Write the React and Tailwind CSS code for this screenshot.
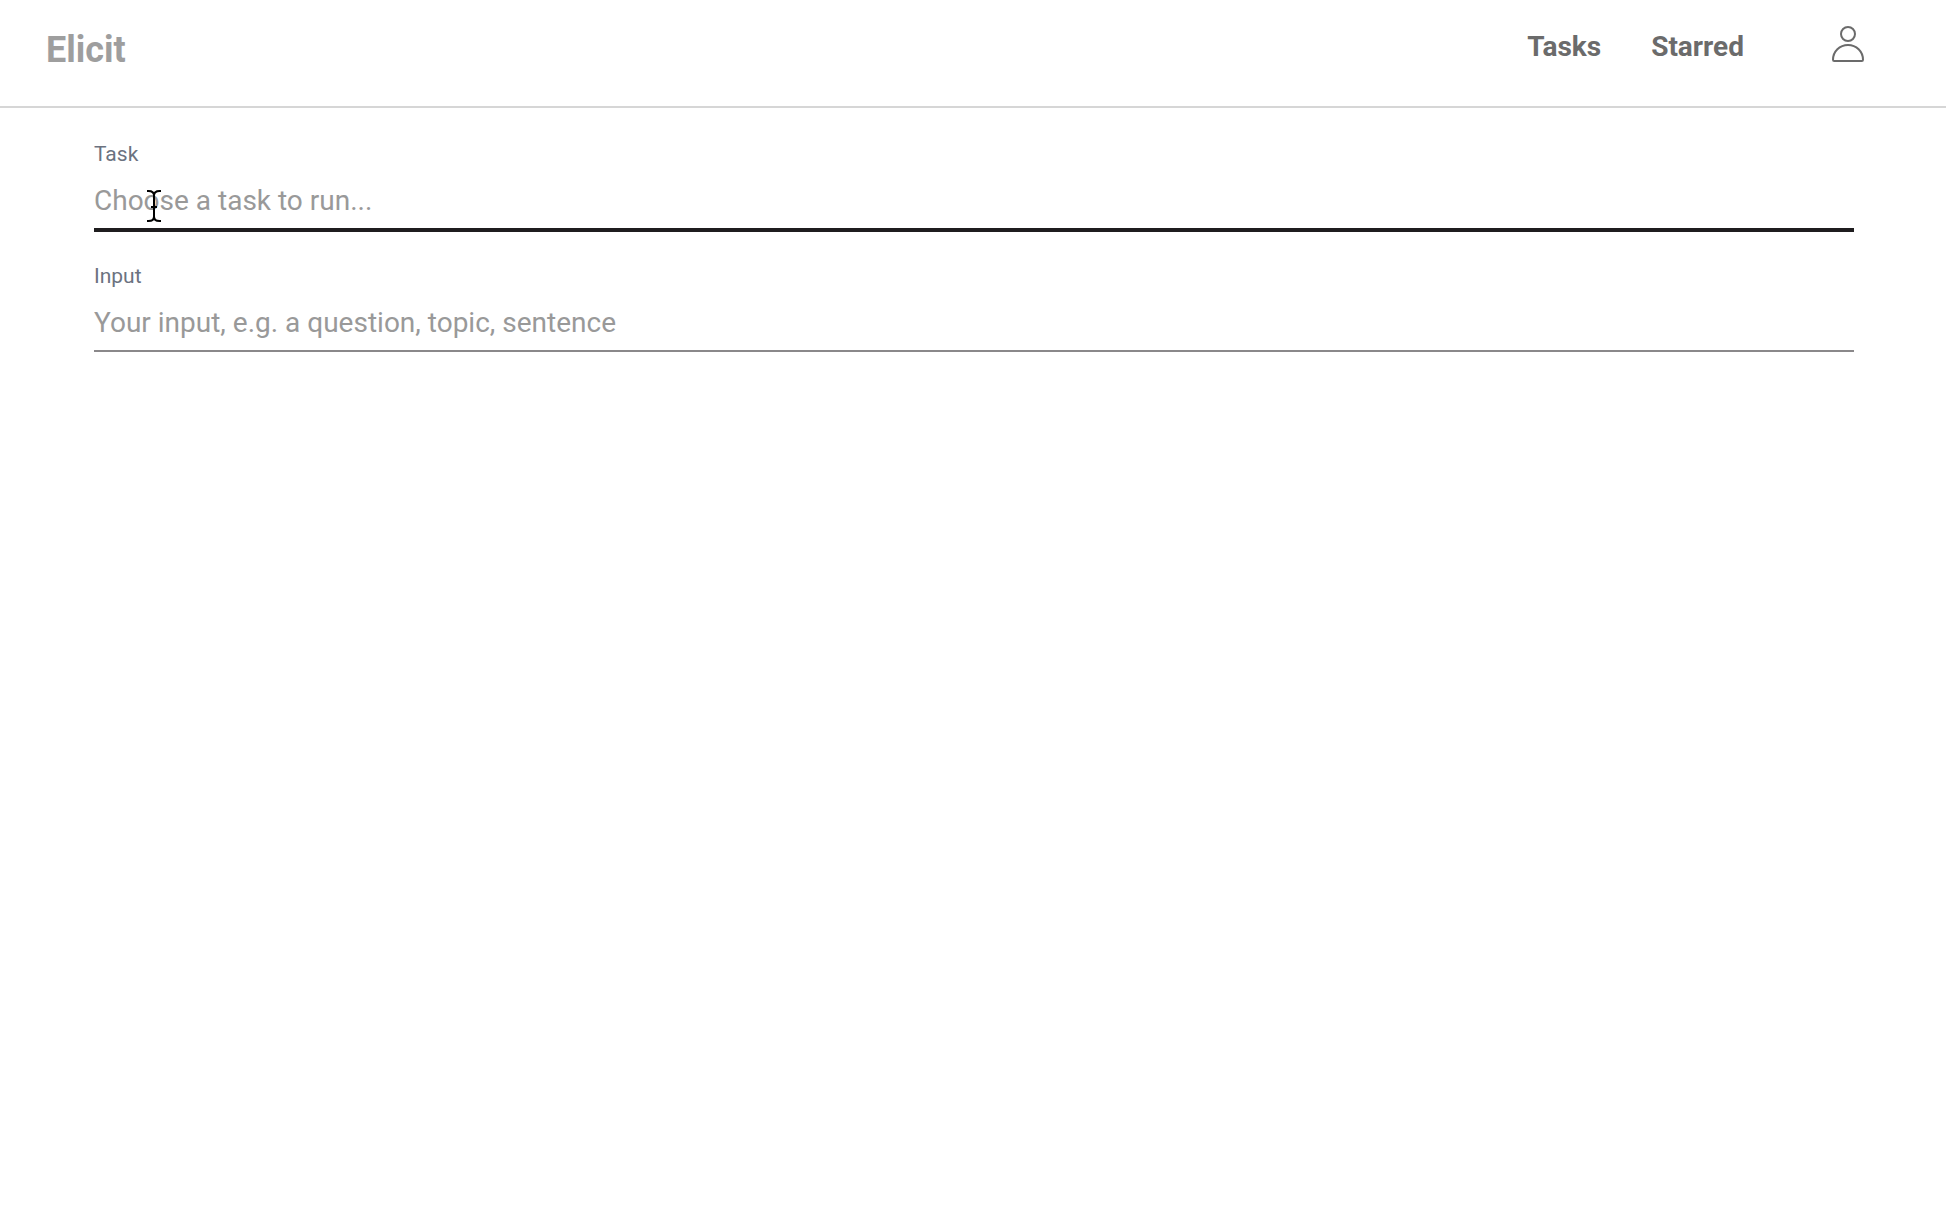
import React from 'react';

const navLinks = [
  { label: 'Tasks', href: '#tasks' },
  { label: 'Starred', href: '#starred' },
];

const UserIcon = () => (
  <svg width="32" height="36" viewBox="0 0 32 36" fill="none" stroke="#6b6b6b" strokeWidth="2" aria-hidden="true">
    <circle cx="16" cy="8" r="7" />
    <path d="M2.2 35h27.6c.8 0 1.2-.4 1.2-1.2C31 25.6 24.4 19 16 19S1 25.6 1 33.8c0 .8.4 1.2 1.2 1.2z" />
  </svg>
);

const TextCursor = () => (
  <svg
    className="pointer-events-none absolute left-[53px] top-[14px]"
    width="14"
    height="32"
    viewBox="0 0 14 32"
    fill="none"
    stroke="#000"
    strokeWidth="2"
    aria-hidden="true"
  >
    <path d="M0 1h1.5C5 1 7 3 7 5.500C7 3 9 1 12.500 1H14M7 5v22M0 31h1.500C5 31 7 29 7 26.500C7 29 9 31 12.500 31H14M4 17h6" />
  </svg>
);

const Header = () => (
  <header className="flex h-27 items-start justify-between border-b-2 border-[#d6d6d6] pl-[46px] pr-[82px]">
    <a href="#home" className="mt-[30px] text-[36px] leading-10 font-bold text-[#9e9e9e]">
      Elicit
    </a>
    <div className="flex items-start">
      <nav className="mt-[31px] flex gap-[50px] text-[28px] leading-8 font-bold text-[#6b6b6b]">
        {navLinks.map((link) => (
          <a key={link.label} href={link.href}>
            {link.label}
          </a>
        ))}
      </nav>
      <button type="button" aria-label="Account" className="mt-[26px] ml-[88px]">
        <UserIcon />
      </button>
    </div>
  </header>
);

const Field = ({ id, label, placeholder, active }) => (
  <div className="h-[122px]">
    <label htmlFor={id} className="block text-[21px] leading-7 text-[#6b7280]">
      {label}
    </label>
    <div className="relative mt-2">
      <input
        id={id}
        type="text"
        placeholder={placeholder}
        className={`block w-full pt-[9px] pb-[11px] text-[28px] leading-8 text-[#1f1d1f] outline-none placeholder:text-[#999999] placeholder:opacity-100 ${
          active ? 'border-b-4 border-[#1f1d1f]' : 'border-b-2 border-[#8a888a]'
        }`}
      />
      {active && <TextCursor />}
    </div>
  </div>
);

const App = () => {
  return (
    <div className="min-h-screen bg-white font-['Roboto',sans-serif]">
      <Header />
      <main className="pt-8 pl-[94px] pr-[92px]">
        <Field id="task" label="Task" placeholder="Choose a task to run..." active />
        <Field id="input" label="Input" placeholder="Your input, e.g. a question, topic, sentence" />
      </main>
    </div>
  );
};

export default App;
